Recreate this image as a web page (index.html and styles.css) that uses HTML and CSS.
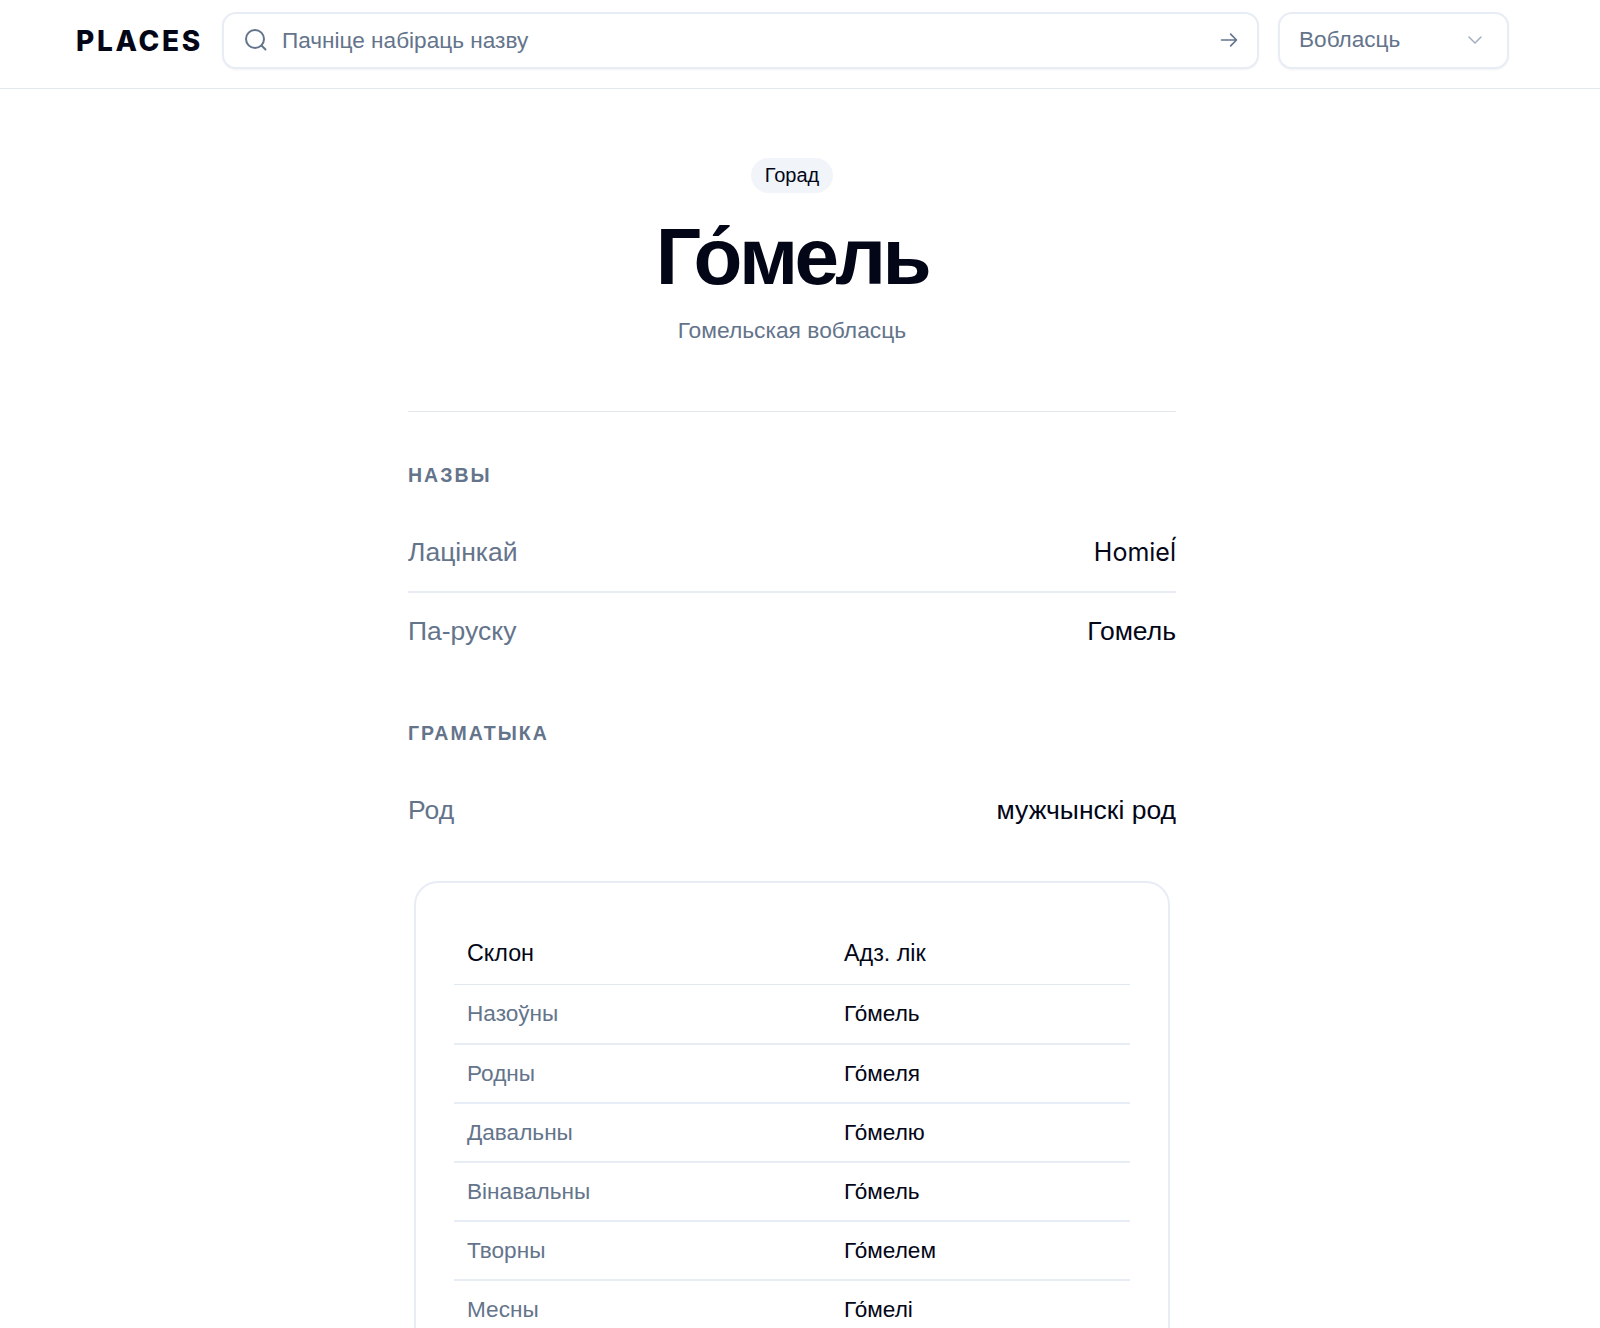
FILE: index.html
```html
<!DOCTYPE html>
<html lang="be">
<head>
<meta charset="utf-8">
<title>Гомель</title>
<link rel="stylesheet" href="styles.css">
</head>
<body>
<header class="topbar">
  <div class="topbar-inner">
    <a class="logo">PLACES</a>
    <div class="search">
      <svg class="search-icon" viewBox="0 0 24 24" fill="none" stroke="currentColor" stroke-width="2" stroke-linecap="round" stroke-linejoin="round"><circle cx="11" cy="11" r="9"/><path d="M21.5 21.5l-4-4"/></svg>
      <span class="search-text">Пачніце набіраць назву</span>
      <svg class="arrow-icon" viewBox="0 0 24 24" fill="none" stroke="currentColor" stroke-width="2" stroke-linecap="round" stroke-linejoin="round"><path d="M3 12h18M14 5l7 7-7 7"/></svg>
    </div>
    <div class="select">
      <span>Вобласць</span>
      <svg class="chevron" viewBox="0 0 24 24" fill="none" stroke="currentColor" stroke-width="2" stroke-linecap="round" stroke-linejoin="round"><path d="M4 8l8 8 8-8"/></svg>
    </div>
  </div>
</header>
<main class="content">
  <section class="hero">
    <span class="badge">Горад</span>
    <h1 class="title">Го́мель</h1>
    <p class="subtitle">Гомельская вобласць</p>
  </section>
  <section class="group">
    <h2 class="group-title">Назвы</h2>
    <div class="row"><span class="row-label">Лацінкай</span><span class="row-value latin">Homieĺ</span></div>
    <div class="row"><span class="row-label">Па-руску</span><span class="row-value">Гомель</span></div>
  </section>
  <section class="group">
    <h2 class="group-title">Граматыка</h2>
    <div class="row"><span class="row-label">Род</span><span class="row-value">мужчынскі род</span></div>
  </section>
  <div class="card">
    <table class="cases">
      <thead><tr><th>Склон</th><th>Адз. лік</th></tr></thead>
      <tbody>
        <tr><td>Назоўны</td><td>Го́мель</td></tr>
        <tr><td>Родны</td><td>Го́меля</td></tr>
        <tr><td>Давальны</td><td>Го́мелю</td></tr>
        <tr><td>Вінавальны</td><td>Го́мель</td></tr>
        <tr><td>Творны</td><td>Го́мелем</td></tr>
        <tr><td>Месны</td><td>Го́мелі</td></tr>
      </tbody>
    </table>
  </div>
</main>
</body>
</html>
```

FILE: styles.css
```css
* { box-sizing: border-box; }
html { overflow: hidden; height: 100%; }
body {
  margin: 0;
  background: #fff;
  color: #020617;
  font-family: "Liberation Sans", Arial, sans-serif;
}
.topbar { border-bottom: 1px solid #e2e8f0; height: 89px; }
.topbar-inner {
  width: 1584px;
  height: 100%;
  padding: 0 75px 8px 76px;
  display: flex;
  align-items: center;
  gap: 20px;
}
.logo {
  font-family: Inter, sans-serif;
  font-weight: 800;
  font-size: 28px;
  letter-spacing: 2.7px;
  line-height: 34px;
  padding-top: 1px;
  width: 127px;
  margin-right: -1px;
}
.search, .select {
  height: 57px;
  border: 2px solid #e8edf5;
  border-radius: 14px;
  background: #fff;
  box-shadow: 0 1px 2px rgba(15, 23, 42, 0.05);
  display: flex;
  align-items: center;
  color: #64748b;
  font-size: 22.6px;
}
.search { flex: 1; padding: 0 18px 0 20px; }
.search-icon { width: 24px; height: 24px; margin-right: 14px; }
.search-text { flex: 1; padding-top: 1px; }
.arrow-icon { width: 20px; height: 20px; }
.select { width: 231px; margin-left: -1px; padding: 0 23px 0 19px; justify-content: space-between; }
.chevron { width: 18px; height: 18px; color: #a3afc0; }
.content { width: 768px; margin: 0 0 0 408px; }
.hero {
  display: flex;
  flex-direction: column;
  align-items: center;
  padding: 69px 0 65px;
  border-bottom: 1px solid #e2e8f0;
}
.badge {
  background: #f1f5f9;
  border-radius: 999px;
  font-size: 20px;
  line-height: 35px;
  padding: 0 14px;
}
.title {
  margin: 16px 0 0;
  font-size: 80px;
  line-height: 96px;
  font-weight: 700;
  letter-spacing: -3.6px;
}
.subtitle { margin: 9px 0 0; color: #64748b; font-size: 22.8px; line-height: 32px; }
.group { padding-top: 51px; }
.group + .group { padding-top: 50px; }
.group-title {
  margin: 0 0 27px;
  color: #64748b;
  font-size: 19.5px;
  line-height: 24px;
  font-weight: 700;
  text-transform: uppercase;
  letter-spacing: 2px;
}
.group + .group .group-title { margin-bottom: 26px; }
.row {
  display: flex;
  justify-content: space-between;
  align-items: center;
  height: 78.5px;
  font-size: 26.5px;
  border-bottom: 2px solid #e8edf5;
}
.row:last-child { border-bottom: 0; }
.row-label { color: #64748b; }
.row-value { font-size: 26.5px; }
.row-value.latin { font-family: Inter, sans-serif; font-size: 25px; }
.card {
  margin: 31px 6px 0;
  border: 2px solid #e8edf5;
  border-radius: 24px;
  padding: 40px 38px 38px;
}
.cases { width: 100%; border-collapse: collapse; font-size: 22.6px; table-layout: fixed; }
.cases th { font-weight: 400; font-size: 23.3px; text-align: left; padding: 0 12px; height: 62px; border-bottom: 1px solid #e2e8f0; }
.cases th:first-child { width: 378px; padding-left: 13px; }
.cases td { padding: 1px 12px 0; height: 59px; border-bottom: 2px solid #e8edf5; }
.cases td:first-child { color: #64748b; padding-left: 13px; }
.cases tr:last-child td { border-bottom: 0; }
```
